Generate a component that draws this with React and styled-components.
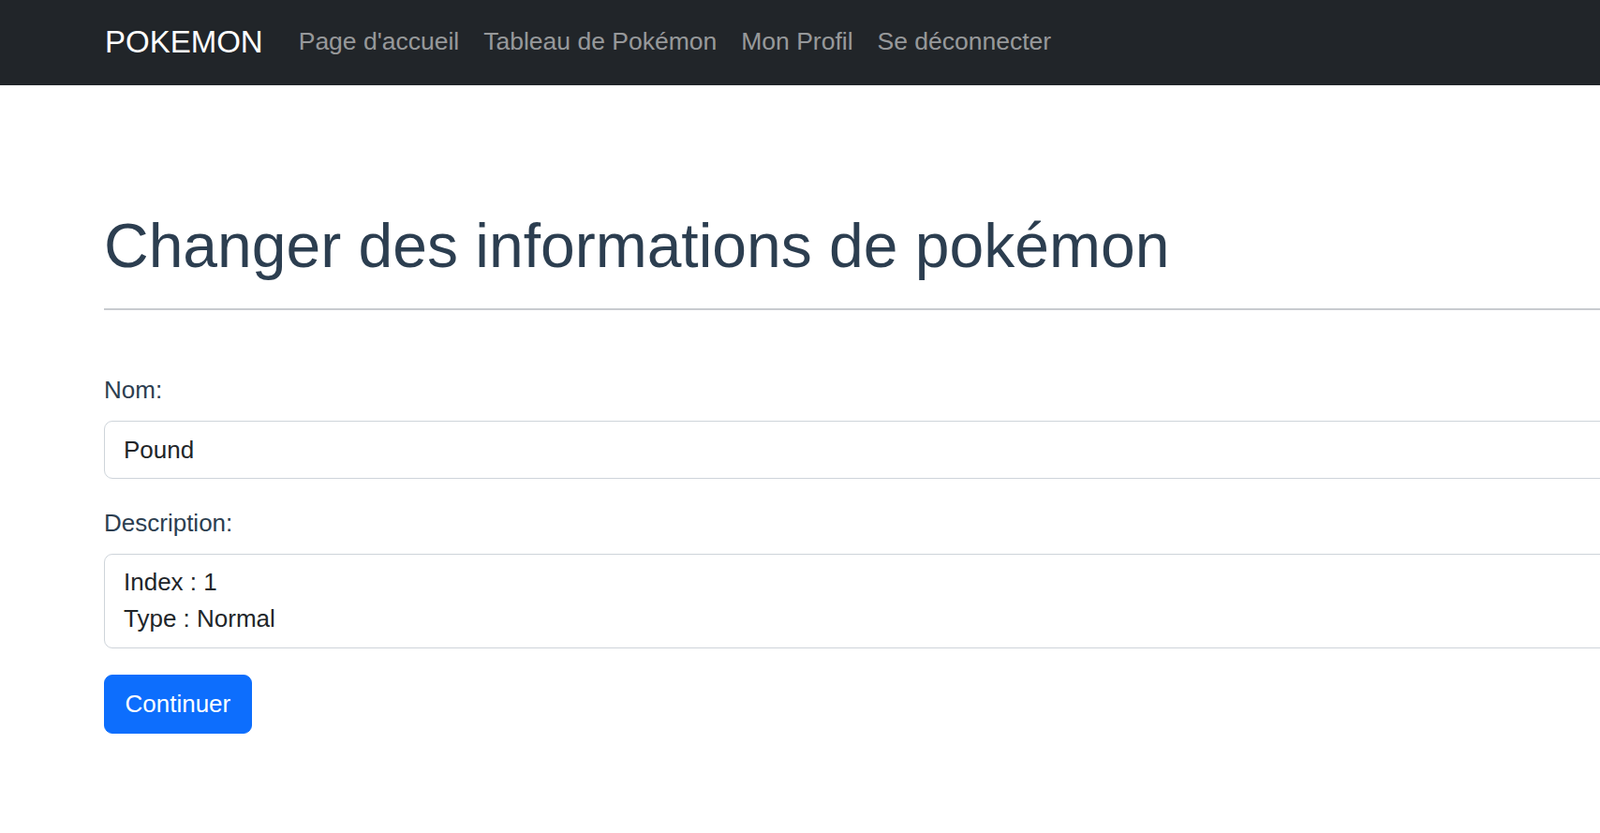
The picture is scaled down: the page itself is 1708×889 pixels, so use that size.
import React from 'react';
import styled, { createGlobalStyle } from 'styled-components';

const GlobalStyle = createGlobalStyle`
  html, body {
    margin: 0;
    padding: 0;
    background: #ffffff;
    overflow-x: hidden;
  }
  body {
    font-family: "Liberation Sans", Arial, sans-serif;
    font-size: 26px;
    line-height: 1.5;
    color: #212529;
  }
  * {
    box-sizing: border-box;
  }
`;

const Navbar = styled.nav`
  height: 91px;
  background-color: #212529;
  display: flex;
  align-items: center;
  padding: 0 0 2px 112px;
`;

const Brand = styled.a`
  color: #ffffff;
  font-size: 33px;
  line-height: 1.5;
  text-decoration: none;
  margin-right: 25px;
`;

const NavLinks = styled.ul`
  display: flex;
  list-style: none;
  margin: 0;
  padding: 0;
`;

const NavLink = styled.a`
  display: block;
  padding: 0 13px;
  color: rgba(255, 255, 255, 0.55);
  text-decoration: none;
  font-size: 26.5px;
  line-height: 39px;
`;

const Main = styled.main`
  padding: 132px 0 0 111px;
  margin-right: -300px;
`;

const Title = styled.h1`
  margin: 0;
  font-size: 66px;
  font-weight: 400;
  line-height: 1.2;
  color: #2c3e50;
`;

const Divider = styled.hr`
  margin: 27px 0 0;
  border: 0;
  border-top: 2px solid #c8cbcf;
`;

const Form = styled.form`
  margin-top: 66px;
  display: flex;
  flex-direction: column;
  align-items: flex-start;
`;

const Field = styled.div`
  width: 100%;
  margin-bottom: 28px;
`;

const Label = styled.label`
  display: block;
  margin-bottom: 13px;
  color: #2c3e50;
`;

const Input = styled.input`
  display: block;
  width: 100%;
  height: 62px;
  padding: 10.5px 20px;
  font: inherit;
  color: #212529;
  background: #ffffff;
  border: 1px solid #ced4da;
  border-radius: 9px;
  outline: none;
`;

const TextArea = styled.textarea`
  display: block;
  width: 100%;
  height: 101px;
  padding: 10px 20px;
  font: inherit;
  line-height: 39px;
  color: #212529;
  background: #ffffff;
  border: 1px solid #ced4da;
  border-radius: 9px;
  resize: none;
  outline: none;
  overflow: hidden;
`;

const Button = styled.button`
  height: 63px;
  padding: 0 21.5px;
  font: inherit;
  color: #ffffff;
  background-color: #0d6efd;
  border: 1px solid #0d6efd;
  border-radius: 9px;
  cursor: pointer;
`;

const links = ["Page d'accueil", 'Tableau de Pokémon', 'Mon Profil', 'Se déconnecter'];

export default function App() {
  return (
    <>
      <GlobalStyle />
      <Navbar>
        <Brand href="#">POKEMON</Brand>
        <NavLinks>
          {links.map((l) => (
            <li key={l}>
              <NavLink href="#">{l}</NavLink>
            </li>
          ))}
        </NavLinks>
      </Navbar>
      <Main>
        <Title>Changer des informations de pokémon</Title>
        <Divider />
        <Form onSubmit={(e) => e.preventDefault()}>
          <Field>
            <Label htmlFor="nom">Nom:</Label>
            <Input id="nom" type="text" defaultValue="Pound" />
          </Field>
          <Field>
            <Label htmlFor="description">Description:</Label>
            <TextArea id="description" defaultValue={'Index : 1\nType : Normal'} />
          </Field>
          <Button type="submit">Continuer</Button>
        </Form>
      </Main>
    </>
  );
}
